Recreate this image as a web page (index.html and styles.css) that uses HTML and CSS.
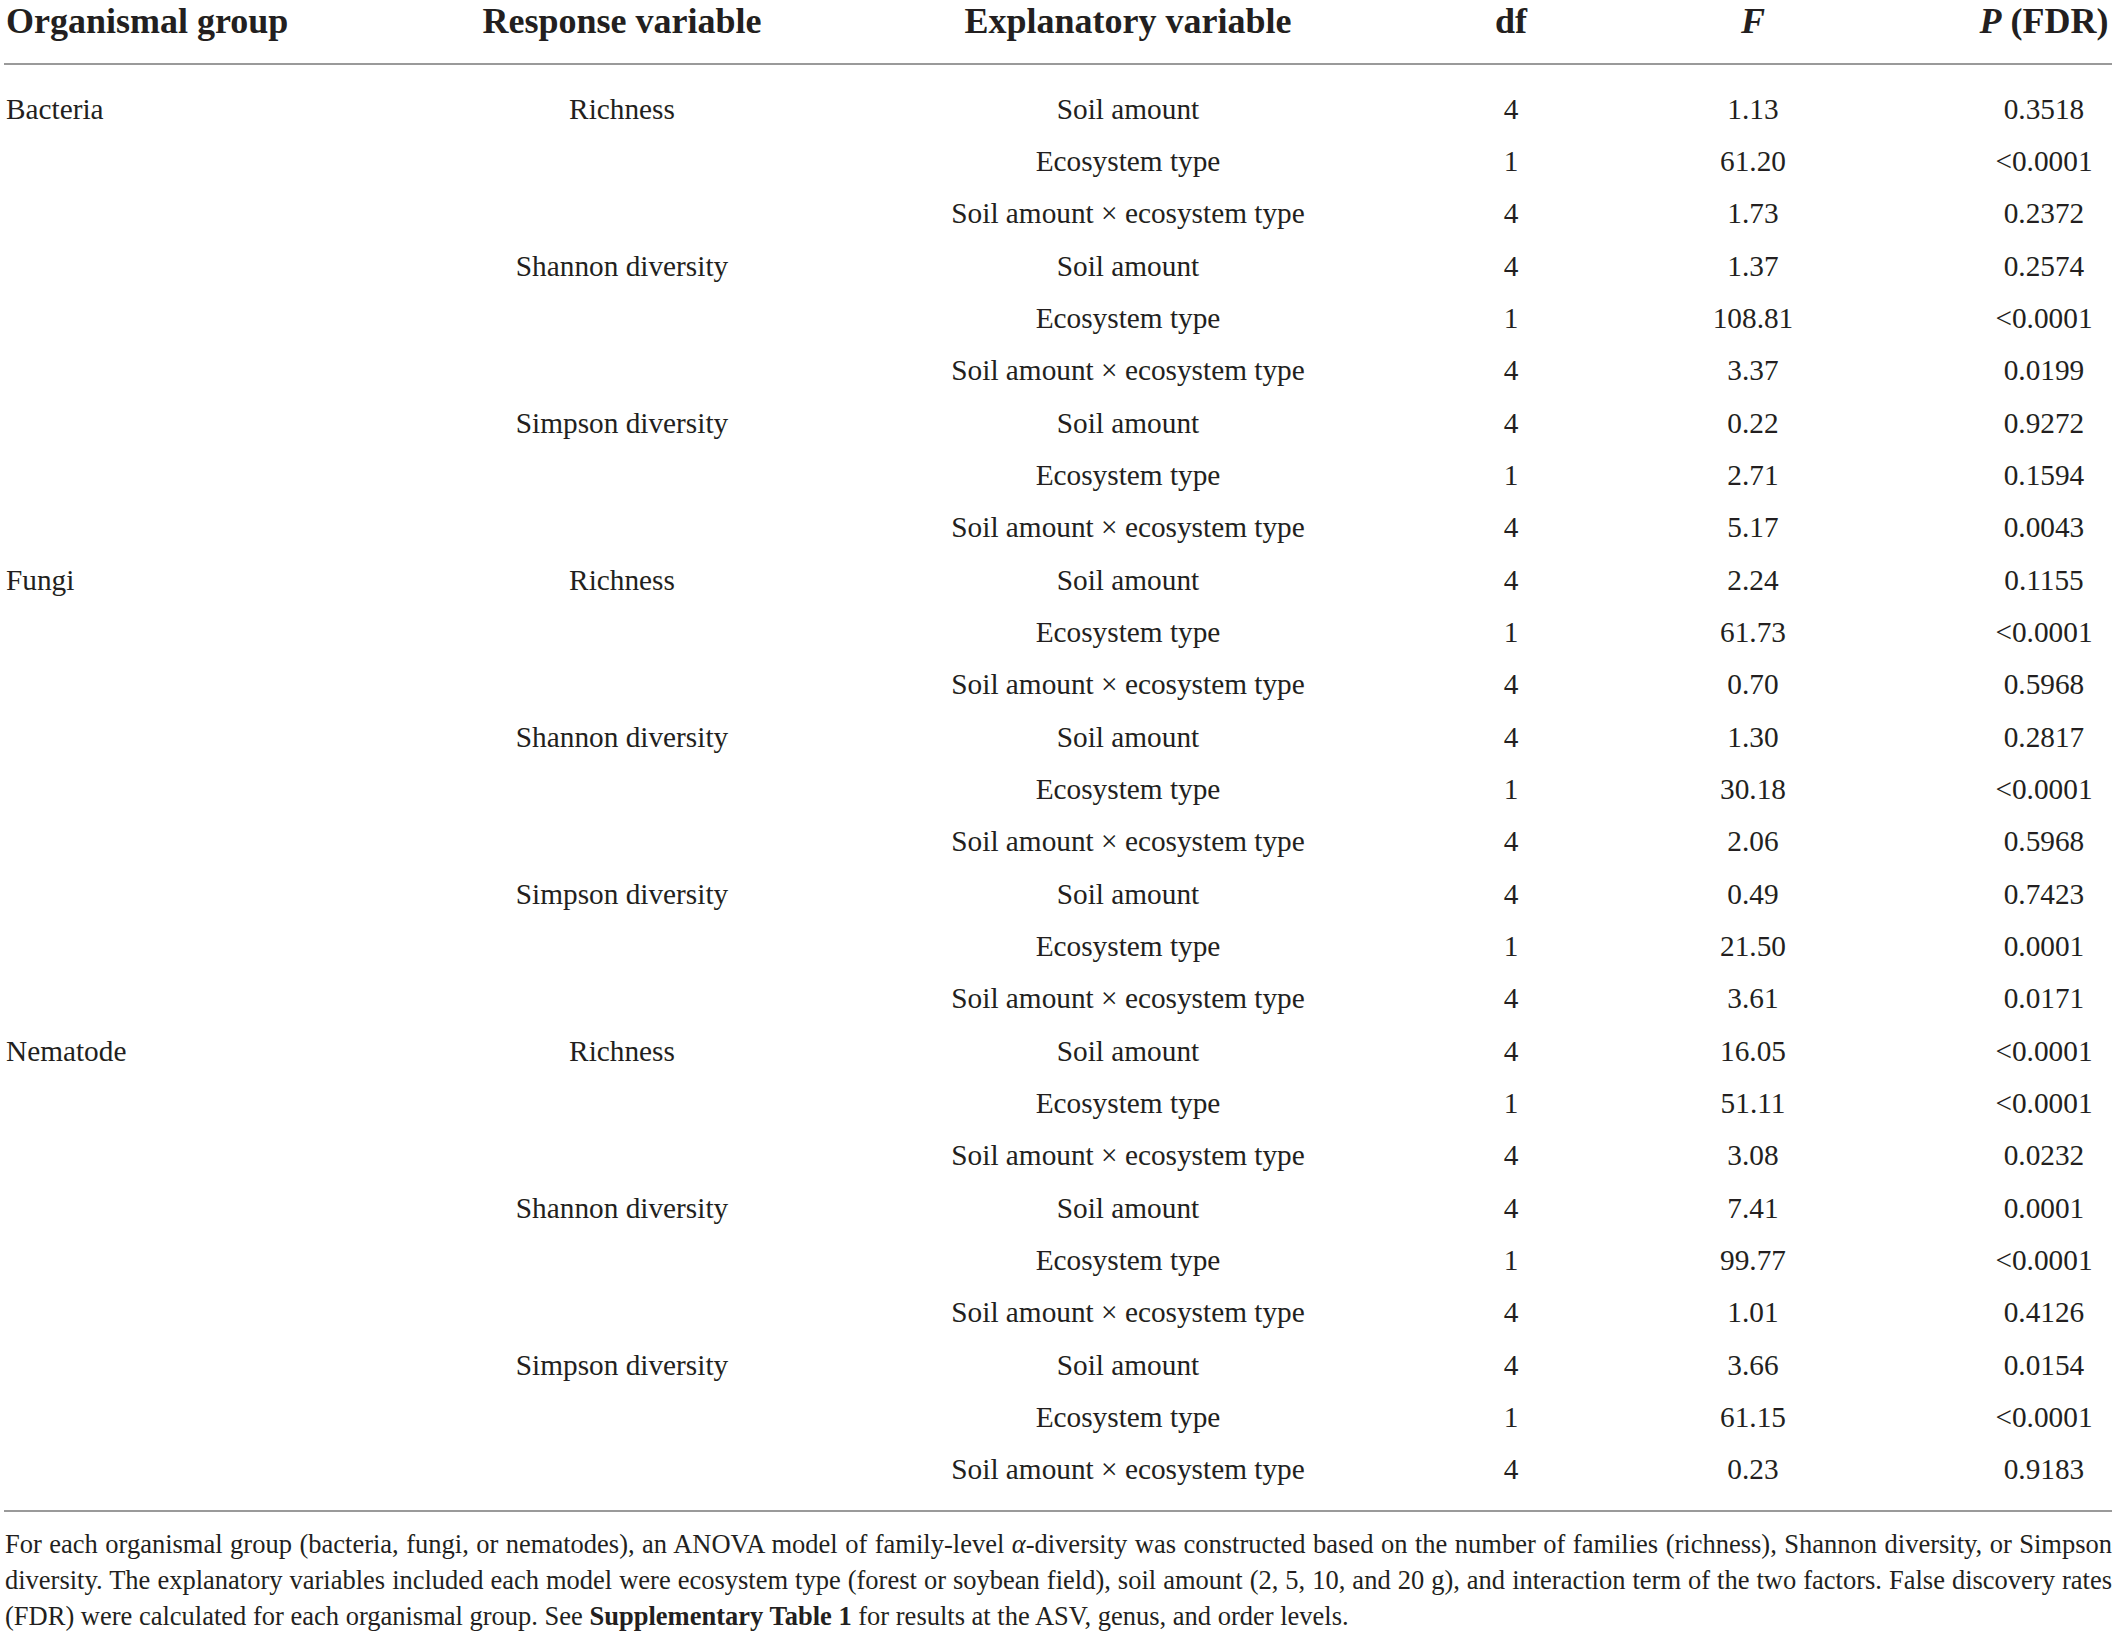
FILE: index.html
```html
<!DOCTYPE html>
<html lang="en">
<head>
    <meta charset="UTF-8">
    <meta name="viewport" content="width=device-width, initial-scale=1.0">
    <title>ANOVA of family-level diversity</title>
    <link rel="stylesheet" href="styles.css">
</head>
<body>
    <div class="tablo">
        <table class="anova">
            <colgroup>
                <col class="c-grup">
                <col class="c-yanit">
                <col class="c-aciklayici">
                <col class="c-df">
                <col class="c-f">
                <col class="c-p">
            </colgroup>
            <thead>
                <tr>
                    <th class="sol">Organismal group</th>
                    <th>Response variable</th>
                    <th>Explanatory variable</th>
                    <th>df</th>
                    <th><i>F</i></th>
                    <th class="p"><i>P</i> (FDR)</th>
                </tr>
            </thead>
            <tbody>
                <!-- Bacteria -->
                <tr class="ilk">
                    <td class="sol">Bacteria</td><td>Richness</td><td>Soil amount</td><td>4</td><td>1.13</td><td class="p">0.3518</td>
                </tr>
                <tr><td class="sol"></td><td></td><td>Ecosystem type</td><td>1</td><td>61.20</td><td class="p">&lt;0.0001</td></tr>
                <tr><td class="sol"></td><td></td><td>Soil amount × ecosystem type</td><td>4</td><td>1.73</td><td class="p">0.2372</td></tr>
                <tr><td class="sol"></td><td>Shannon diversity</td><td>Soil amount</td><td>4</td><td>1.37</td><td class="p">0.2574</td></tr>
                <tr><td class="sol"></td><td></td><td>Ecosystem type</td><td>1</td><td>108.81</td><td class="p">&lt;0.0001</td></tr>
                <tr><td class="sol"></td><td></td><td>Soil amount × ecosystem type</td><td>4</td><td>3.37</td><td class="p">0.0199</td></tr>
                <tr><td class="sol"></td><td>Simpson diversity</td><td>Soil amount</td><td>4</td><td>0.22</td><td class="p">0.9272</td></tr>
                <tr><td class="sol"></td><td></td><td>Ecosystem type</td><td>1</td><td>2.71</td><td class="p">0.1594</td></tr>
                <tr><td class="sol"></td><td></td><td>Soil amount × ecosystem type</td><td>4</td><td>5.17</td><td class="p">0.0043</td></tr>

                <!-- Fungi -->
                <tr><td class="sol">Fungi</td><td>Richness</td><td>Soil amount</td><td>4</td><td>2.24</td><td class="p">0.1155</td></tr>
                <tr><td class="sol"></td><td></td><td>Ecosystem type</td><td>1</td><td>61.73</td><td class="p">&lt;0.0001</td></tr>
                <tr><td class="sol"></td><td></td><td>Soil amount × ecosystem type</td><td>4</td><td>0.70</td><td class="p">0.5968</td></tr>
                <tr><td class="sol"></td><td>Shannon diversity</td><td>Soil amount</td><td>4</td><td>1.30</td><td class="p">0.2817</td></tr>
                <tr><td class="sol"></td><td></td><td>Ecosystem type</td><td>1</td><td>30.18</td><td class="p">&lt;0.0001</td></tr>
                <tr><td class="sol"></td><td></td><td>Soil amount × ecosystem type</td><td>4</td><td>2.06</td><td class="p">0.5968</td></tr>
                <tr><td class="sol"></td><td>Simpson diversity</td><td>Soil amount</td><td>4</td><td>0.49</td><td class="p">0.7423</td></tr>
                <tr><td class="sol"></td><td></td><td>Ecosystem type</td><td>1</td><td>21.50</td><td class="p">0.0001</td></tr>
                <tr><td class="sol"></td><td></td><td>Soil amount × ecosystem type</td><td>4</td><td>3.61</td><td class="p">0.0171</td></tr>

                <!-- Nematode -->
                <tr><td class="sol">Nematode</td><td>Richness</td><td>Soil amount</td><td>4</td><td>16.05</td><td class="p">&lt;0.0001</td></tr>
                <tr><td class="sol"></td><td></td><td>Ecosystem type</td><td>1</td><td>51.11</td><td class="p">&lt;0.0001</td></tr>
                <tr><td class="sol"></td><td></td><td>Soil amount × ecosystem type</td><td>4</td><td>3.08</td><td class="p">0.0232</td></tr>
                <tr><td class="sol"></td><td>Shannon diversity</td><td>Soil amount</td><td>4</td><td>7.41</td><td class="p">0.0001</td></tr>
                <tr><td class="sol"></td><td></td><td>Ecosystem type</td><td>1</td><td>99.77</td><td class="p">&lt;0.0001</td></tr>
                <tr><td class="sol"></td><td></td><td>Soil amount × ecosystem type</td><td>4</td><td>1.01</td><td class="p">0.4126</td></tr>
                <tr><td class="sol"></td><td>Simpson diversity</td><td>Soil amount</td><td>4</td><td>3.66</td><td class="p">0.0154</td></tr>
                <tr><td class="sol"></td><td></td><td>Ecosystem type</td><td>1</td><td>61.15</td><td class="p">&lt;0.0001</td></tr>
                <tr class="son"><td class="sol"></td><td></td><td>Soil amount × ecosystem type</td><td>4</td><td>0.23</td><td class="p">0.9183</td></tr>
            </tbody>
        </table>

        <p class="dipnot">For each organismal group (bacteria, fungi, or nematodes), an ANOVA model of family-level <i>α</i>-diversity was constructed based on the number of families (richness), Shannon diversity, or Simpson diversity. The explanatory variables included each model were ecosystem type (forest or soybean field), soil amount (2, 5, 10, and 20 g), and interaction term of the two factors. False discovery rates (FDR) were calculated for each organismal group. See <b>Supplementary Table 1</b> for results at the ASV, genus, and order levels.</p>
    </div>
</body>
</html>
```

FILE: styles.css
```css
/* Sayfa geneli */
body {
    margin: 0;
    padding: 0;
    background-color: #ffffff;
    color: #231f20;
    font-family: 'Liberation Serif', 'Times New Roman', serif;
}

.tablo {
    width: 2108px;
    padding: 0 5px 0 4px;
}

/* Tablo */
.anova {
    width: 2108px;
    border-collapse: collapse;
    table-layout: fixed;
}

.c-grup { width: 426px; }
.c-yanit { width: 384px; }
.c-aciklayici { width: 628px; }
.c-df { width: 138px; }
.c-f { width: 346px; }
.c-p { width: 186px; }

/* Başlık satırı */
.anova th {
    font-size: 36px;
    font-weight: bold;
    line-height: 42px;
    padding: 0 0 21px 0;
    text-align: center;
    white-space: nowrap;
    border-bottom: 2px solid #9a9a9a;
}

/* Veri hücreleri */
.anova td {
    font-size: 29.3px;
    line-height: 52.35px;
    padding: 0;
    text-align: center;
    white-space: nowrap;
}

.anova .sol {
    text-align: left;
    padding-left: 2px;
}

.anova .p {
    padding-left: 50px;
}

.anova tr.ilk td {
    padding-top: 17.5px;
}

.anova tr.son td {
    padding-bottom: 14.5px;
    border-bottom: 2px solid #9a9a9a;
}

/* Tablo altı açıklama */
.dipnot {
    margin: 14px 0 0 0;
    padding-left: 1px;
    font-size: 26.5px;
    line-height: 36px;
    text-align: justify;
}
```
